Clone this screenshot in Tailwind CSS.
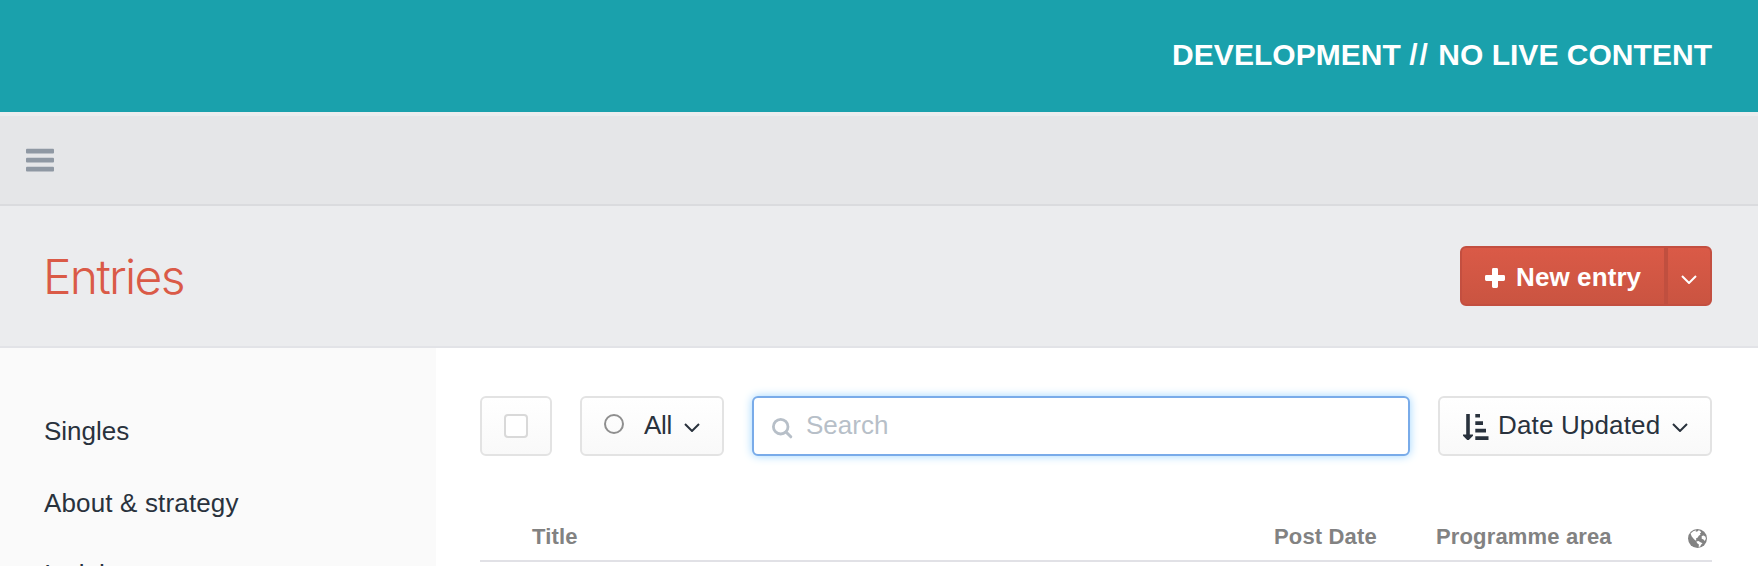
<!DOCTYPE html>
<html lang="en">
<head>
<meta charset="utf-8">
<title>Entries</title>
<script src="https://cdn.jsdelivr.net/npm/@tailwindcss/browser@4"></script>
</head>
<body class="w-[1758px] h-[566px] overflow-hidden bg-white font-['Liberation_Sans',Arial,sans-serif] text-[26px] leading-8 text-[#29323d]">
<div class="flex h-full flex-col">
  <div class="flex h-28 shrink-0 items-center justify-end bg-[#1aa1ac] pr-[46px] pb-[2px] text-[30px] font-bold tracking-[0.03px] text-white"><span>DEVELOPMENT <span class="tracking-[2px]">//</span> NO LIVE CONTENT</span></div>
  <nav class="flex h-[94px] shrink-0 items-center border-t-4 border-b-2 border-t-[#ebedee] border-b-[#dadbde] bg-[#e5e6e8] pl-[26px]">
    <svg class="h-6 w-7" viewBox="0 0 28 24" fill="#8f98a3"><rect y="0.8" width="28" height="4.8" rx="1"/><rect y="9.8" width="28" height="4.8" rx="1"/><rect y="18.8" width="28" height="4.8" rx="1"/></svg>
  </nav>
  <header class="flex h-[142px] shrink-0 items-center justify-between border-b-2 border-[#e2e3e7] bg-[#ebecee] pr-[46px] pl-[43px]">
    <h1 class="pt-px font-['Inter'] text-[48px] leading-[56px] font-light tracking-[-1.7px] text-[#da5a47]">Entries</h1>
    <div class="flex h-[60px] w-[252px] rounded-[6px] border-2 border-[#c34f40] bg-linear-to-b from-[#da5a47] to-[#ca5441] text-white">
      <button class="flex w-[202px] items-center pl-[23px] font-bold">
        <svg class="mt-[4px] mr-[11px] h-5 w-5" viewBox="0 0 20 20" fill="#fff"><path d="M8.400 0h3.200q1.400 0 1.400 1.400V7h5.600Q20 7 20 8.400v3.200q0 1.400-1.400 1.400H13v5.600q0 1.400-1.400 1.400H8.400Q7 20 7 18.600V13H1.400Q0 13 0 11.600V8.400Q0 7 1.400 7H7V1.400Q7 0 8.400 0z"/></svg>
        <span class="pt-[2px] tracking-[0.1px]">New entry</span>
      </button>
      <span class="w-1 bg-[#c04f3f]"></span>
      <button class="flex flex-1 items-center pt-[6px] pl-[13px]"><svg class="h-[9px] w-4" viewBox="0 0 16 9" fill="none" stroke="#fff" stroke-width="2"><path d="M1 1l7 7 7-7"/></svg></button>
    </div>
  </header>
  <div class="flex min-h-0 flex-1">
    <aside class="flex w-[436px] flex-col gap-10 bg-[#fafafa] pt-[67px] pl-11">
      <a>Singles</a><a class="tracking-[0.15px]">About &amp; strategy</a><a class="-mt-px">Insights</a>
    </aside>
    <main class="flex-1 pt-12 pr-[46px] pl-11">
      <div class="flex h-[60px]">
        <button class="flex w-[72px] items-center justify-center rounded-[6px] border-2 border-[#e3e3e3] bg-linear-to-b from-white to-[#f9f9f9]"><span class="h-6 w-6 rounded-[4px] border-2 border-[#d9d9d9] bg-white"></span></button>
        <button class="ml-7 flex w-36 items-center rounded-[6px] border-2 border-[#e3e3e3] bg-linear-to-b from-white to-[#f9f9f9] pl-[22px]">
          <span class="mb-1 h-5 w-5 rounded-full border-2 border-[#8f8f8f]"></span>
          <span class="ml-5 w-[40px] pb-[2px] text-left tracking-[-0.3px]">All</span>
          <svg class="mt-[2px] h-[9px] w-4" viewBox="0 0 16 9" fill="none" stroke="#29323d" stroke-width="2"><path d="M1 1l7 7 7-7"/></svg>
        </button>
        <div class="ml-7 flex w-[658px] items-center rounded-[6px] border-2 border-[#79abe9] bg-white pl-[18px] shadow-[0_0_10px_#9fd6ff]">
          <svg class="mt-[4px] h-[21px] w-[21px]" viewBox="0 0 21 21" fill="none" stroke="#b7bfc8"><circle cx="8.700" cy="8.700" r="7.300" stroke-width="2.800"/><path d="M14 14l4.800 4.800" stroke-width="3" stroke-linecap="round"/></svg>
          <span class="ml-[13px] pb-[2px] text-[#b7bfc8]">Search</span>
        </div>
        <button class="ml-7 flex w-[274px] items-center rounded-[6px] border-2 border-[#e3e3e3] bg-linear-to-b from-white to-[#f9f9f9] pl-[23px]">
          <svg class="mt-[2px] h-[26px] w-[26px]" viewBox="0 0 26 26" fill="#29323d"><path d="M3.200 0h3.600v20.500h3.200v1.200L5.800 26H4.200L0 21.700v-1.200h3.200zM12.300 0h4.700v3.600h-4.700zM12.300 7.300h7.700v3.700h-7.700zM12.300 14.800h10.700v3.700h-10.700zM12.300 22.200h13.200v3.700h-13.200z"/></svg>
          <span class="ml-[9px] w-[174px] pb-[2px] text-left tracking-[0.15px]">Date Updated</span>
          <svg class="mt-[2px] h-[9px] w-4" viewBox="0 0 16 9" fill="none" stroke="#29323d" stroke-width="2"><path d="M1 1l7 7 7-7"/></svg>
        </button>
      </div>
      <div class="mt-[56px] flex h-[50px] items-center border-b-2 border-[#e1e1e6] pt-[2px] pl-[52px] text-[22px] font-bold tracking-[0.15px] text-[#828282]">
        <span class="w-[742px]">Title</span>
        <span class="w-[162px]">Post Date</span>
        <span class="w-[252px]">Programme area</span>
        <svg class="mt-[3px] h-[19px] w-[19px] shrink-0" viewBox="0 0 19 19"><circle cx="9.500" cy="9.500" r="9.500" fill="#828282"/><path fill="#fff" d="M2.600 4.600Q5 1.700 8.300 1.200L7.600 2.800 9.300 2.500 10.800 1.300 12.300 2 13.200 3.800 11.800 4.300 12.600 5.600 10.800 6.800 9.500 8.700 7.900 9.600 8.400 11.200 7.300 11.400 5.400 9.400 3.600 7.300zM8.300 12.600L10.400 12 12.500 13.300 14.500 14.200 13 15.800 12.200 17.600 10.700 17.900 10.900 15.500 9.200 14.200zM13.700 7L15.700 6.600 17.500 7.700 17.900 9.800 16.700 12 15.500 10.600 13.700 9.800z"/></svg>
      </div>
    </main>
  </div>
</div>
</body>
</html>
